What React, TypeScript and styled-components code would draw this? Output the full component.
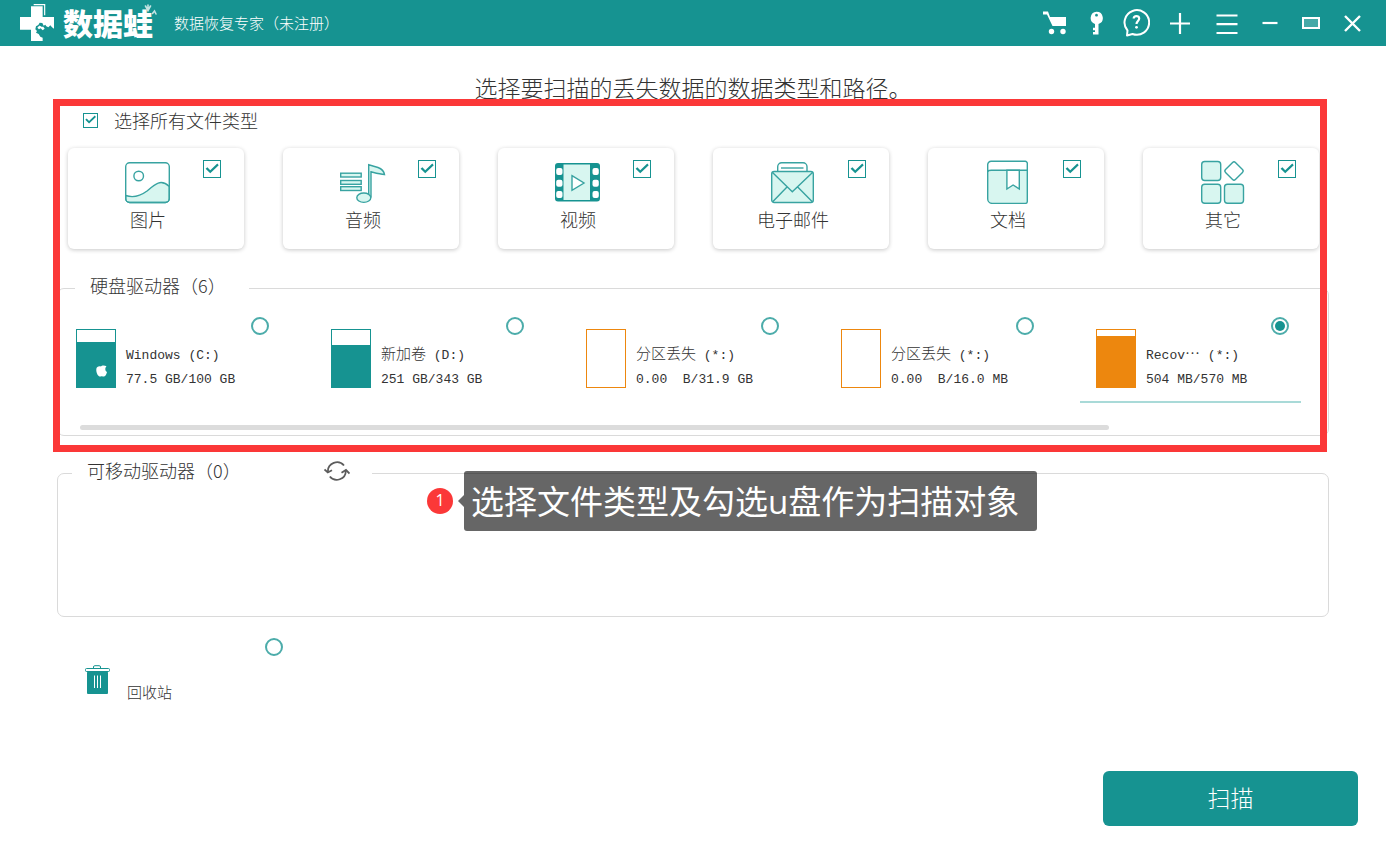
import React from 'react';
import styled, { createGlobalStyle } from 'styled-components';

const TEAL = '#169391';
const ORANGE = '#ed870e';
const RED = '#fb3838';
const MINT = '#d8f6f0';
const LINE = '#dadada';
const INK = '#333';

const GlobalStyle = createGlobalStyle`
  *, *::before, *::after { box-sizing: border-box; }
  body {
    margin: 0;
    background: #fff;
    color: ${INK};
    font-family: 'Noto Sans CJK SC', sans-serif;
    font-weight: 300;
  }
  button, input { font: inherit; margin: 0; }
  svg { display: block; }
`;

const Page = styled.div`
  min-height: 100vh;
  display: flex;
  flex-direction: column;
`;

const TitleBar = styled.header`
  display: flex;
  align-items: center;
  height: 46px;
  padding: 0 25px 0 19px;
  background: ${TEAL};
  color: #fff;
`;

const Brand = styled.div`
  position: relative;
  display: flex;
  align-items: center;
  gap: 8px;
  margin-bottom: 3px;
  font-size: 30px;
  line-height: 40px;
  font-weight: 900;
`;

const Sprout = styled.svg`
  position: absolute;
  right: -4px;
  top: 2px;
`;

const AppName = styled.span`
  margin-left: 21px;
  font-size: 15px;
  line-height: 24px;
`;

const Actions = styled.nav`
  display: flex;
  align-items: center;
  gap: 20px;
  margin-left: auto;
`;

const WindowActions = styled.div`
  display: flex;
  align-items: center;
  gap: 24px;
  margin-left: 6px;
`;

const IconButton = styled.button`
  display: flex;
  align-items: center;
  padding: 0;
  border: 0;
  background: none;
  color: inherit;
  cursor: pointer;
`;

const Main = styled.main`
  padding: 0 57px;
`;

const Heading = styled.h1`
  margin: 0;
  padding: 26px 0 2px;
  text-align: center;
  font-size: 23px;
  line-height: 30px;
  font-weight: 300;
`;

const ScanSource = styled.section`
  position: relative;
`;

const Highlight = styled.div`
  position: absolute;
  inset: -5px 2px -16px -4px;
  border: 7px solid ${RED};
  pointer-events: none;
`;

const CheckBox = styled.input.attrs({ type: 'checkbox' })<{ $size: number }>`
  appearance: none;
  flex: none;
  width: ${(p) => p.$size}px;
  height: ${(p) => p.$size}px;
  border: 1px solid ${TEAL};
  background: #fff;
  &:checked::before {
    content: '';
    display: block;
    height: 100%;
    background: ${TEAL};
    clip-path: polygon(10% 48%, 21% 39%, 39% 58%, 83% 16%, 92% 27%, 39% 77%);
  }
`;

const Radio = styled.input.attrs({ type: 'radio' })`
  appearance: none;
  flex: none;
  display: grid;
  place-items: center;
  width: 18px;
  height: 18px;
  border: 2px solid #4cacaa;
  border-radius: 50%;
  background: #fff;
  &:checked::before {
    content: '';
    width: 10px;
    height: 10px;
    border-radius: 50%;
    background: ${TEAL};
  }
`;

const SelectAll = styled.label`
  display: flex;
  align-items: center;
  gap: 16px;
  padding: 4px 0 0 26px;
  font-size: 18px;
  line-height: 24px;
`;

const TypeGrid = styled.div`
  display: grid;
  grid-template-columns: repeat(6, 1fr);
  gap: 39px;
  padding: 16px 10px 0 11px;
`;

const TypeCard = styled.label`
  display: grid;
  grid-template-columns: 1fr 46px 1fr;
  row-gap: 3px;
  padding: 12px 16px 18px 0;
  border-radius: 6px;
  background: #fff;
  box-shadow: 0 1px 4px rgba(0, 0, 0, 0.22);
  font-size: 18px;
  line-height: 24px;

  svg { grid-column: 2; }
  input { grid-column: 3; justify-self: end; margin-right: 7px; }
  span { grid-column: 1 / -1; text-align: center; }
`;

const Group = styled.fieldset<{ $height: number }>`
  min-width: 0;
  min-height: ${(p) => p.$height}px;
  margin: 0;
  padding: 0;
  border: 1px solid ${LINE};
  border-radius: 7px;
`;

const Legend = styled.legend<{ $width: number; $indent: number }>`
  display: flex;
  justify-content: space-between;
  align-items: center;
  width: ${(p) => p.$width}px;
  margin-left: ${(p) => p.$indent}px;
  padding: 0 22px 6px 15px;
  font-size: 18px;
  line-height: 24px;
`;

const DriveGroup = styled.div`
  padding-top: 24px;
`;

const DriveList = styled.div`
  display: flex;
  gap: 34px;
  padding: 14px 0 0 2px;
  overflow: hidden;
`;

const DriveTile = styled.label<{ $selected?: boolean }>`
  flex: none;
  display: flex;
  width: 221px;
  height: 86px;
  padding: 0 12px 0 16px;
  border-bottom: 2px solid ${(p) => (p.$selected ? '#a9dad8' : 'transparent')};
  input { margin-left: auto; }
`;

const Gauge = styled.div<{ $color: string }>`
  flex: none;
  display: flex;
  align-items: flex-end;
  width: 40px;
  height: 59px;
  margin-top: 12px;
  border: 1px solid ${(p) => p.$color};
`;

const GaugeFill = styled.div<{ $color: string }>`
  display: flex;
  justify-content: flex-end;
  align-items: flex-end;
  width: 100%;
  padding: 0 8px 10px;
  background: ${(p) => p.$color};
`;

const DriveText = styled.div`
  margin: 27px 0 0 10px;
  white-space: pre;
  font-family: 'Liberation Mono', 'Noto Sans CJK SC', monospace;
  font-size: 13px;
  line-height: 24px;
  font-weight: 400;
`;

const DriveLine = styled.div`
  height: 24px;
`;

const Han = styled.span`
  font-family: 'Noto Sans CJK SC', sans-serif;
  font-size: 15px;
  line-height: 1;
  font-weight: 300;
`;

const ScrollThumb = styled.div`
  width: 81%;
  height: 5px;
  margin: 22px 0 5px 22px;
  border-radius: 3px;
  background: #dcdcdc;
`;

const Removable = styled.section`
  position: relative;
  padding-top: 22px;
`;

const Callout = styled.aside`
  position: absolute;
  top: 35px;
  left: 370px;
  display: flex;
  align-items: center;
`;

const Step = styled.span`
  width: 26px;
  height: 26px;
  margin-right: 5px;
  border-radius: 50%;
  background: ${RED};
  color: #fff;
  text-align: center;
  font: 400 16px/24px 'Open Sans', sans-serif;
`;

const Arrow = styled.span`
  border: 6px solid transparent;
  border-left: 0;
  border-right-color: rgba(0, 0, 0, 0.6);
`;

const Bubble = styled.p`
  margin: 0;
  padding: 2px 18px 0 7px;
  border-radius: 3px;
  background: rgba(0, 0, 0, 0.6);
  color: #fff;
  white-space: nowrap;
  font: 400 33px/58px 'Open Sans', 'Noto Sans CJK SC', sans-serif;
`;

const RecycleBin = styled.label`
  display: flex;
  width: 226px;
  margin-top: 21px;
  padding-left: 28px;
  font-size: 15px;
  line-height: 24px;
  svg { margin-top: 27px; }
  span { margin: 42px 0 0 16px; }
  input { margin-left: auto; }
`;

const Footer = styled.footer`
  display: flex;
  justify-content: flex-end;
  margin-top: auto;
  padding: 25px 28px;
`;

const ScanButton = styled.button`
  width: 255px;
  height: 55px;
  padding: 0 0 3px;
  border: 0;
  border-radius: 6px;
  background: ${TEAL};
  color: #fff;
  font-size: 23px;
  font-weight: 300;
  cursor: pointer;
`;

const Logo = () => (
  <svg width="36" height="40" viewBox="57 3 108 120" aria-hidden="true">
    <path d="M101 11H134V43" fill="none" stroke="#fff" strokeWidth="3.5" />
    <path
      fill="#fff"
      d="M93 16H128V48H162V83L156 79L151 73L145 79L139 76L136 71L131 74L127 66L119 65L115 72L108 76L106 85L111 90L108 95L116 99L121 107L128 110V120H93V86H60V48H93Z"
    />
    <path d="M112 80l7-7 5 4 6 0 4 6-6 5-6-6-5 3z" fill="#fff" />
    <circle cx="121" cy="72" r="3" fill={TEAL} />
  </svg>
);

const CartIcon = () => (
  <svg width="27" height="24" viewBox="0 0 27 24">
    <path d="M0 0.5H5L7 6H23V15H9.500L4 3.500H0Z" fill="currentColor" />
    <circle cx="8.500" cy="20.500" r="2.700" fill="currentColor" />
    <circle cx="20" cy="20.500" r="2.700" fill="currentColor" />
  </svg>
);

const KeyIcon = () => (
  <svg width="13" height="24" viewBox="0 0 13 24">
    <path
      fill="currentColor"
      fillRule="evenodd"
      d="M6.500 0.800a6.200 6.200 0 0 1 2 12.100V23.500H3V21H5V19.200H3V16.700H5V12.900A6.200 6.200 0 0 1 6.500 0.800ZM6.500 2.800a1.400 1.400 0 1 0 .01 0Z"
    />
  </svg>
);

const HelpIcon = () => (
  <svg width="27" height="30" viewBox="0 0 27 30" fill="none" stroke="currentColor">
    <path d="M4.500 22.500A12.300 12.300 0 1 1 9.500 26L4 27.500Z" strokeWidth="2" strokeLinejoin="round" />
    <path d="M10.700 10.500C10.800 7.200 16.300 7.200 16.200 10.600C16.200 13 13.500 13 13.500 16" strokeWidth="2.200" />
    <circle cx="13.500" cy="19.300" r="1.400" fill="currentColor" stroke="none" />
  </svg>
);

const PlusIcon = () => (
  <svg width="20" height="22" viewBox="0 0 20 22" stroke="currentColor" strokeWidth="2.200">
    <path d="M0 11.500H20M10 1V22" />
  </svg>
);

const MenuIcon = () => (
  <svg width="22" height="24" viewBox="0 0 22 24" stroke="currentColor" strokeWidth="2.200">
    <path d="M0.500 4.500H21.500M0.500 13.200H21.500M0.500 22H21.500" />
  </svg>
);

const MinimizeIcon = () => (
  <svg width="16" height="4" viewBox="0 0 16 4" stroke="currentColor" strokeWidth="2.200">
    <path d="M0.500 2H15.500" />
  </svg>
);

const MaximizeIcon = () => (
  <svg width="18" height="12" viewBox="0 0 18 12" stroke="currentColor" strokeWidth="2">
    <rect x="1" y="1" width="16" height="10" fill="#45a9a7" />
  </svg>
);

const CloseIcon = () => (
  <svg width="17" height="17" viewBox="0 0 17 17" stroke="currentColor" strokeWidth="2.400">
    <path d="M1 1L16 16M16 1L1 16" />
  </svg>
);

const TypeSvg = ({ children }: { children: React.ReactNode }) => (
  <svg width="46" height="44" viewBox="0 0 46 44" fill="none" stroke="#38a3a1" strokeWidth="1.400" aria-hidden="true">
    {children}
  </svg>
);

const PictureIcon = () => (
  <TypeSvg>
    <path
      d="M0.700 35.500C8 38 14 37 22 31C30 24 36 18.500 44.300 26.500V38.500a4 4 0 0 1-4 4H4.700a4 4 0 0 1-4-4Z"
      fill={MINT}
    />
    <rect x="0.700" y="2.700" width="43.600" height="39.800" rx="4" />
    <circle cx="13.700" cy="16" r="4.800" />
  </TypeSvg>
);

const AudioIcon = () => (
  <TypeSvg>
    <g fill={MINT}>
      <rect x="0.700" y="13.200" width="20.500" height="3.800" />
      <rect x="0.700" y="20.500" width="20.500" height="3.800" />
      <rect x="0.700" y="26.700" width="20.500" height="3.800" />
      <path d="M28.700 34V4.800L38 7.500C42 9 44 11 44.500 14.600C40 14.200 35 12.800 31 11.800V37.500" />
      <ellipse cx="23.800" cy="37.700" rx="7" ry="4.700" />
    </g>
  </TypeSvg>
);

const VideoIcon = () => (
  <TypeSvg>
    <rect x="0" y="3" width="45" height="38.500" rx="3" fill={TEAL} stroke="none" />
    <rect x="8.500" y="4.500" width="26.500" height="35.500" fill={MINT} stroke="none" />
    <g fill="#fff" stroke="none">
      {[8, 19.7, 31].map((y) => (
        <React.Fragment key={y}>
          <rect x="1.200" y={y} width="6.300" height="7" rx="2" />
          <rect x="37.500" y={y} width="6.300" height="7" rx="2" />
        </React.Fragment>
      ))}
    </g>
    <path d="M17 15.700L29 23L17 30.300Z" fill="#fff" />
  </TypeSvg>
);

const MailIcon = () => (
  <TypeSvg>
    <path d="M7.700 11.500V6.700a4 4 0 0 1 4-4H33a4 4 0 0 1 4 4V11.500" fill="#fff" />
    <path d="M11 8H33.500" />
    <rect x="1.700" y="11.500" width="41.600" height="31" rx="2.500" fill={MINT} />
    <path d="M2.500 12.500L22.300 31.700L42.500 12.500M2.700 41.700L17 27M42.300 41.700L27.700 27" />
  </TypeSvg>
);

const DocIcon = () => (
  <TypeSvg>
    <path d="M2.700 6V39a4.500 4.500 0 0 0 4.500 4.400H40.300a2 2 0 0 0 2-2V10.300H6Z" fill={MINT} />
    <path d="M42.300 10.300V3.300a2 2 0 0 0-2-2H6.200A3.500 3.500 0 0 0 2.700 4.800V12C2.700 11 4 10.300 6.200 10.300Z" fill="#fff" />
    <path d="M21.900 10.300V29L28.100 25L34.300 29V10.300Z" fill="#fff" />
  </TypeSvg>
);

const OtherIcon = () => (
  <TypeSvg>
    <g fill={MINT}>
      <rect x="1.700" y="1.500" width="19" height="19" rx="3" />
      <rect x="1.700" y="24.300" width="19" height="19" rx="3" />
      <rect x="24.500" y="24.300" width="19" height="19" rx="3" />
    </g>
    <rect x="27" y="4" width="14" height="14" rx="2" transform="rotate(45 34 11)" />
  </TypeSvg>
);

const AppleMark = () => (
  <svg width="11" height="12" viewBox="0 0 11 12" aria-hidden="true">
    <path
      fill="#fff"
      d="M5 1.500C6 0 9 .5 10.500 1.300C8.700 3 9 6 11 7C10.500 9 9.500 11.500 8 11.500C7 11.500 6.500 11 5.500 11.200C4.500 11.300 4 11.800 3 11.200C1 10 0 6.500 .3 4C.6 1.500 3 .8 5 1.500Z"
    />
  </svg>
);

const RefreshIcon = () => (
  <svg width="26" height="22" viewBox="0 0 26 22" fill="none" stroke="#5c5c5c" strokeWidth="1.800">
    <path d="M4 12.500A9 8.800 0 0 1 20 6.500M21.800 12A9 8.800 0 0 1 5.800 17.500" />
    <path d="M0.500 10.500L3.800 13.500L8 11.300M17.500 13.800L22 11L25.500 14.500" />
  </svg>
);

const TrashIcon = () => (
  <svg width="26" height="30" viewBox="0 0 26 30" fill="none" stroke={TEAL} aria-hidden="true">
    <path d="M8.500 3.500V2a1.300 1.300 0 0 1 1.300-1.300H14.200A1.300 1.300 0 0 1 15.500 2V3.500" />
    <rect x="2" y="6.500" width="21" height="22.500" rx="1" fill={TEAL} stroke="none" />
    <rect x="0.500" y="3.500" width="24" height="3" rx="1" fill="#fff" />
    <path d="M9.500 10.500V23M12.500 10.500V23M15.500 10.500V23" stroke="#fff" />
  </svg>
);

const fileTypes = [
  { name: '图片', Icon: PictureIcon },
  { name: '音频', Icon: AudioIcon },
  { name: '视频', Icon: VideoIcon },
  { name: '电子邮件', Icon: MailIcon },
  { name: '文档', Icon: DocIcon },
  { name: '其它', Icon: OtherIcon },
];

const drives = [
  { id: 'c', latin: 'Windows', letter: ' (C:)', size: '77.5 GB/100 GB', used: 79, color: TEAL, system: true },
  { id: 'd', han: '新加卷', letter: ' (D:)', size: '251 GB/343 GB', used: 74, color: TEAL },
  { id: 'lost1', han: '分区丢失', letter: ' (*:)', size: '0.00  B/31.9 GB', used: 0, color: ORANGE },
  { id: 'lost2', han: '分区丢失', letter: ' (*:)', size: '0.00  B/16.0 MB', used: 0, color: ORANGE },
  { id: 'recovery', latin: 'Recov', han: '…', letter: ' (*:)', size: '504 MB/570 MB', used: 90, color: ORANGE },
];

export default function App() {
  const [selected, setSelected] = React.useState('recovery');
  const [types, setTypes] = React.useState<string[]>(fileTypes.map((t) => t.name));

  const toggle = (name: string) =>
    setTypes((list) => (list.includes(name) ? list.filter((n) => n !== name) : [...list, name]));

  return (
    <Page lang="zh-CN">
      <GlobalStyle />
      <TitleBar>
        <Brand>
          <Logo />
          <span>数据蛙</span>
          <Sprout width="13" height="12" viewBox="0 0 13 12" aria-hidden="true">
            <g fill="none" stroke="#fff" strokeOpacity="0.75" strokeWidth="1.600" strokeLinecap="round">
              <path d="M1.500 2L4 6.500L6.500 2M4 1V6.500M8.500 9.500L10.500 7L12 10" />
            </g>
          </Sprout>
        </Brand>
        <AppName>数据恢复专家（未注册）</AppName>
        <Actions>
          <IconButton aria-label="购买"><CartIcon /></IconButton>
          <IconButton aria-label="注册"><KeyIcon /></IconButton>
          <IconButton aria-label="帮助"><HelpIcon /></IconButton>
          <IconButton aria-label="添加"><PlusIcon /></IconButton>
          <WindowActions>
            <IconButton aria-label="菜单"><MenuIcon /></IconButton>
            <IconButton aria-label="最小化"><MinimizeIcon /></IconButton>
            <IconButton aria-label="最大化"><MaximizeIcon /></IconButton>
            <IconButton aria-label="关闭"><CloseIcon /></IconButton>
          </WindowActions>
        </Actions>
      </TitleBar>

      <Main>
        <Heading>选择要扫描的丢失数据的数据类型和路径。</Heading>

        <ScanSource>
          <SelectAll>
            <CheckBox
              $size={15}
              checked={types.length === fileTypes.length}
              onChange={(e) => setTypes(e.target.checked ? fileTypes.map((t) => t.name) : [])}
            />
            选择所有文件类型
          </SelectAll>
          <TypeGrid>
            {fileTypes.map(({ name, Icon }) => (
              <TypeCard key={name}>
                <Icon />
                <CheckBox $size={18} checked={types.includes(name)} onChange={() => toggle(name)} />
                <span>{name}</span>
              </TypeCard>
            ))}
          </TypeGrid>

          <DriveGroup>
            <Group $height={163}>
              <Legend $width={174} $indent={17}>硬盘驱动器（6）</Legend>
              <DriveList>
                {drives.map((d) => (
                  <DriveTile key={d.id} $selected={selected === d.id}>
                    <Gauge $color={d.color}>
                      {d.used > 0 && (
                        <GaugeFill $color={d.color} style={{ height: `${d.used}%` }}>
                          {d.system && <AppleMark />}
                        </GaugeFill>
                      )}
                    </Gauge>
                    <DriveText>
                      <DriveLine>
                        {d.latin}
                        {d.han && <Han>{d.han}</Han>}
                        {d.letter}
                      </DriveLine>
                      <DriveLine>{d.size}</DriveLine>
                    </DriveText>
                    <Radio name="source" checked={selected === d.id} onChange={() => setSelected(d.id)} />
                  </DriveTile>
                ))}
              </DriveList>
              <ScrollThumb />
            </Group>
          </DriveGroup>
          <Highlight />
        </ScanSource>

        <Removable>
          <Group $height={159}>
            <Legend $width={300} $indent={14}>
              可移动驱动器（0）
              <IconButton aria-label="刷新"><RefreshIcon /></IconButton>
            </Legend>
          </Group>
          <Callout>
            <Step>1</Step>
            <Arrow />
            <Bubble>选择文件类型及勾选u盘作为扫描对象</Bubble>
          </Callout>
        </Removable>

        <RecycleBin>
          <TrashIcon />
          <span>回收站</span>
          <Radio name="source" checked={selected === 'bin'} onChange={() => setSelected('bin')} />
        </RecycleBin>
      </Main>

      <Footer>
        <ScanButton>扫描</ScanButton>
      </Footer>
    </Page>
  );
}
